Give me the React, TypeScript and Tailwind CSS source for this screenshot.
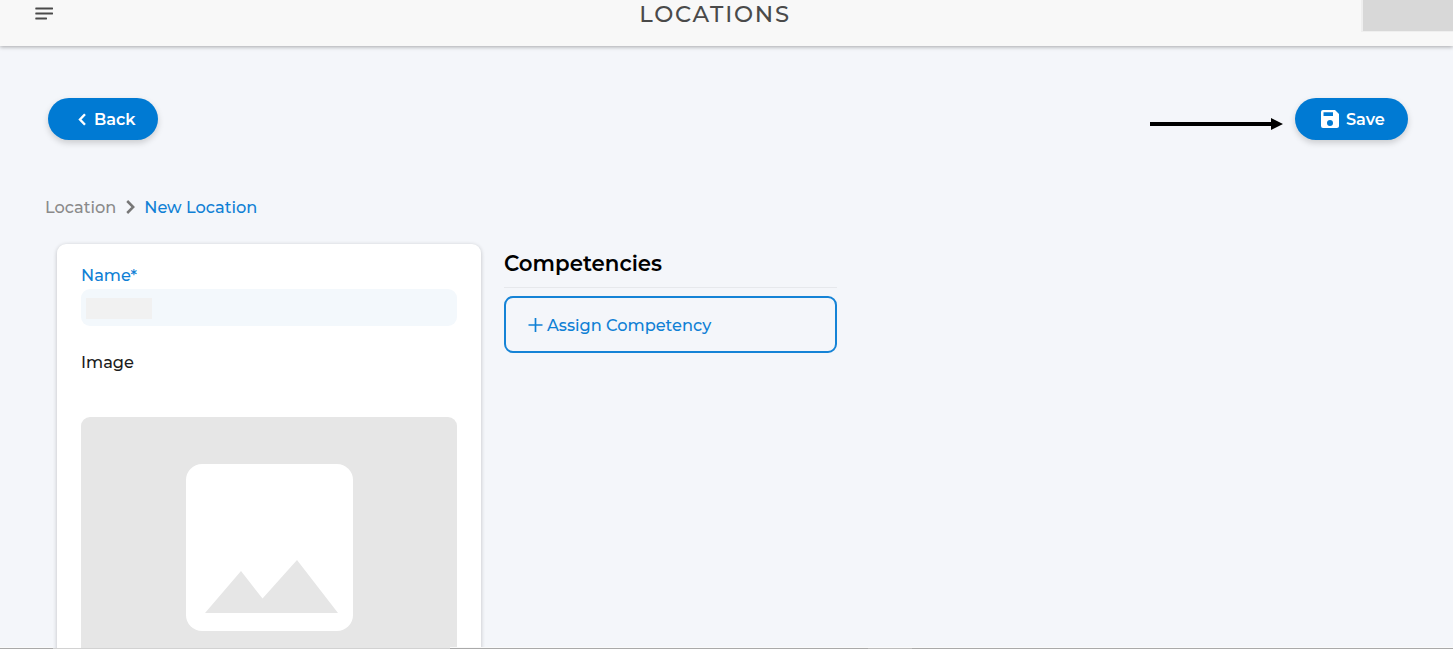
import type { ReactNode } from 'react'

function MenuIcon() {
  return (
    <svg width="18" height="14" viewBox="0 0 18 14" fill="#4a4a4a">
      <rect x="0.300" y="0.500" width="17.700" height="2" rx="0.400" />
      <rect x="0.300" y="5.500" width="17.700" height="2" rx="0.400" />
      <rect x="0.300" y="10.500" width="11.700" height="2" rx="0.400" />
    </svg>
  )
}

function SaveIcon() {
  return (
    <svg width="24" height="24" viewBox="0 0 24 24" fill="currentColor">
      <path
        fillRule="evenodd"
        d="M17 3H5a2 2 0 0 0-2 2v14a2 2 0 0 0 2 2h14c1.100 0 2-.9 2-2V7l-4-4zm-5 16a3 3 0 1 1 0-6 3 3 0 0 1 0 6zm3-10H5.500V5.200h9.500v3.800z"
      />
    </svg>
  )
}

function ImagePlaceholder() {
  return (
    <svg width="167" height="167" viewBox="0 0 167 167">
      <rect width="167" height="167" rx="16" fill="#fff" />
      <path d="M19 149L55 107L76.500 134.500L111 96L152 149Z" fill="#e6e6e6" />
    </svg>
  )
}

function PillButton({ className, children }: { className: string; children: ReactNode }) {
  return (
    <button
      className={`flex h-[42px] items-center rounded-full bg-[#007ad3] text-[16.100px] font-semibold text-white shadow-[0_3px_6px_rgba(0,0,0,0.17)] ${className}`}
    >
      {children}
    </button>
  )
}

export default function App() {
  return (
    <div className="flex h-[649px] w-[1453px] flex-col overflow-hidden bg-[#f4f6fa] font-[Montserrat,Inter,sans-serif]">
      <header className="z-10 flex h-[46px] shrink-0 items-start bg-[#f8f8f8] shadow-[0_1px_4px_rgba(0,0,0,0.32)]">
        <div className="w-[90px] pt-[7px] pl-[35px]">
          <MenuIcon />
        </div>
        <h1 className="flex-1 pt-[2px] pr-[21px] text-center text-[22.700px] leading-6 font-medium tracking-[1.750px] text-[#4a4a4a]">
          LOCATIONS
        </h1>
        <div className="h-8 w-[92px] border-b border-l-2 border-[#efefef] bg-[#d8d8d8]" />
      </header>

      <div className="flex items-start justify-between pt-[52px] pr-[45px] pl-12">
        <PillButton className="w-[110px] pl-[30px]">
          <svg width="8" height="13" viewBox="0 0 8 13" fill="none" stroke="currentColor" strokeWidth="2.400">
            <path d="M7 1.200L2 6.500L7 11.800" />
          </svg>
          <span className="ml-2 pt-px">Back</span>
        </PillButton>
        <div className="flex">
          <svg className="mt-5 mr-3" width="133" height="12" viewBox="0 0 133 12">
            <path d="M0 4H121V0L133 6L121 12V8H0Z" />
          </svg>
          <PillButton className="w-[113px] pl-[23px]">
            <SaveIcon />
            <span className="ml-1 pt-px">Save</span>
          </PillButton>
        </div>
      </div>

      <nav className="mt-[55px] flex h-6 shrink-0 items-center pl-[45px] text-[16.200px] font-medium">
        <span className="pt-px text-[#8a8a8a]">Location</span>
        <svg className="mr-[9px] ml-[10px]" width="9" height="14" viewBox="0 0 9 14" fill="none" stroke="#777" strokeWidth="2.500">
          <path d="M1.200 1L7.200 7L1.200 13" />
        </svg>
        <span className="pt-px text-[#0f80d5]">New Location</span>
      </nav>

      <div className="mt-[25px] flex min-h-0 flex-1 items-stretch pl-[57px]">
        <section className="-mb-5 w-[424px] rounded-t-[9px] bg-white px-6 pt-[19px] shadow-[0_1px_4px_rgba(0,0,0,0.22)]">
          <label className="block h-6 text-[16.200px] leading-6 font-medium text-[#0f80d5]">Name*</label>
          <div className="mt-[2px] h-[37px] rounded-[9px] bg-[#f3f8fc] pt-[9px] pl-[5px]">
            <div className="h-[21px] w-[66px] bg-[#f1f1f1]" />
          </div>
          <p className="mt-[24px] h-6 text-[16.200px] leading-6 font-medium text-[#1c1c1c]">Image</p>
          <div className="mt-[43px] flex h-[280px] justify-center rounded-[9px] bg-[#e6e6e6] pt-[47px]">
            <ImagePlaceholder />
          </div>
        </section>

        <section className="ml-[23px] w-[333px]">
          <h2 className="mt-1 h-[40px] border-b border-[#e6e8ec] text-[21.300px] leading-[30px] font-semibold text-black">
            Competencies
          </h2>
          <button className="mt-2 flex h-[57px] w-full items-center rounded-[9px] border-2 border-[#1583d6] pl-[22px] text-[16.200px] font-medium text-[#0f80d5]">
            <svg width="15" height="14" viewBox="0 0 15 14" fill="none" stroke="currentColor" strokeWidth="1.700">
              <path d="M7.500 0V14M0.500 7H14.500" />
            </svg>
            <span className="ml-1 pt-px">Assign Competency</span>
          </button>
        </section>
      </div>

      <footer className="z-10 -mt-[2px] flex h-[2px] shrink-0">
        <div className="w-[53px] border-t border-[#fafafa] bg-[#a9a9a9]" />
        <div className="w-[397px] border-b border-[#d2d2d2]" />
        <div className="w-[418px] border-t border-[#fafafa] bg-[#a9a9a9]" />
        <div className="w-[44px] border-t border-[#fafafa] bg-[#bcbcbc]" />
        <div className="flex-1 border-t border-[#fafafa] bg-[#a9a9a9]" />
      </footer>
    </div>
  )
}
